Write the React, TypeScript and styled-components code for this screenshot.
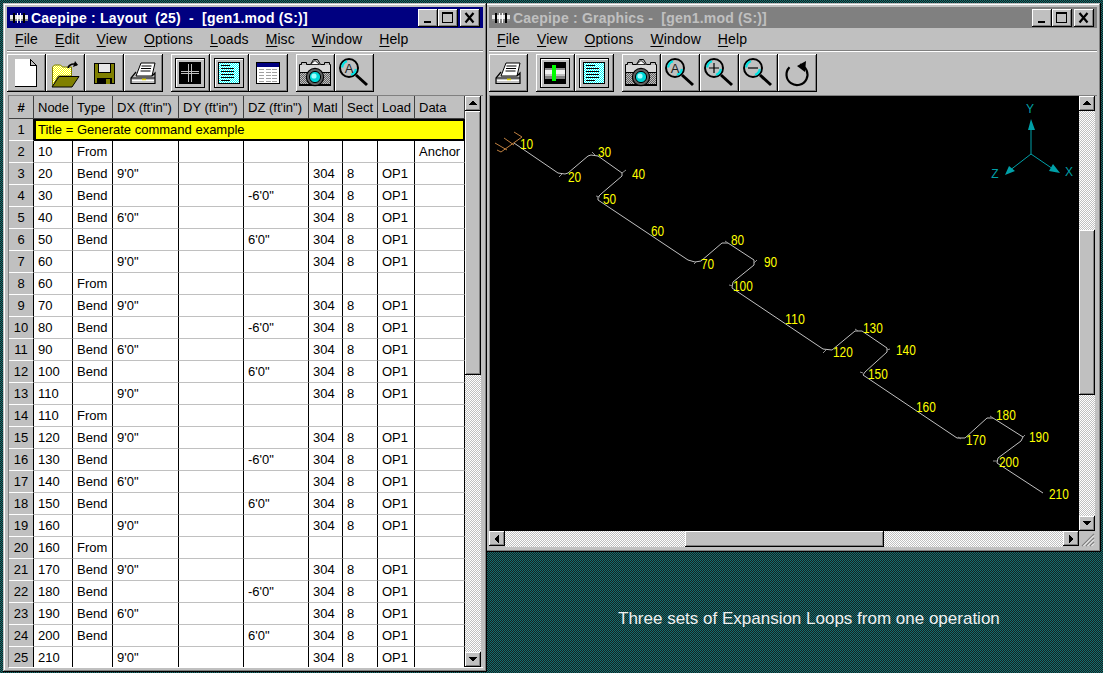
import React from "react";
import styled, { createGlobalStyle, css } from "styled-components";

const Global = createGlobalStyle`
  html, body { margin: 0; padding: 0; width: 1103px; height: 673px; overflow: hidden; }
  body { font-family: "Liberation Sans", Arial, sans-serif; color: #000; }
`;

const checker = (a: string, b: string) =>
  `url("data:image/svg+xml,%3Csvg xmlns='http://www.w3.org/2000/svg' width='2' height='2' shape-rendering='crispEdges'%3E%3Crect width='2' height='2' fill='%23${a}'/%3E%3Crect width='1' height='1' fill='%23${b}'/%3E%3Crect x='1' y='1' width='1' height='1' fill='%23${b}'/%3E%3C/svg%3E")`;

const raised = css`
  background-color: #c0c0c0;
  box-sizing: border-box;
  box-shadow: inset -1px -1px #000, inset 1px 1px #fff, inset -2px -2px #808080;
`;

const Desktop = styled.div`
  position: relative;
  width: 1103px;
  height: 673px;
  overflow: hidden;
  background-image: ${checker("182020", "107070")};
  background-size: 2px 2px;
  image-rendering: pixelated;
`;

const Win = styled.section<{ $x: number; $w: number; $h: number; $z: number }>`
  position: absolute;
  left: ${p => p.$x}px;
  top: 3px;
  width: ${p => p.$w}px;
  height: ${p => p.$h}px;
  z-index: ${p => p.$z};
  box-sizing: border-box;
  padding: 4px;
  display: flex;
  flex-direction: column;
  background: #c0c0c0;
  box-shadow: inset -1px -1px #000, inset 1px 1px #c0c0c0, inset -2px -2px #808080, inset 2px 2px #fff;
`;

const TitleBar = styled.header<{ $active: boolean }>`
  height: 21px;
  flex: none;
  display: flex;
  align-items: center;
  padding: 0 3px;
  gap: 3px;
  background: ${p => (p.$active ? "#000080" : "#808080")};
  color: ${p => (p.$active ? "#fff" : "#c0c0c0")};
`;

const TitleText = styled.span`
  flex: 1;
  font-size: 14px;
  font-weight: 700;
  letter-spacing: 0.2px;
  white-space: pre;
`;

const WinButtons = styled.div`
  display: flex;
  align-items: center;
`;

const WinButton = styled.button<{ $gap?: boolean }>`
  ${raised}
  width: 20px;
  height: 18px;
  padding: 0;
  border: 0;
  margin-left: ${p => (p.$gap ? 2 : 0)}px;
  display: flex;
  align-items: center;
  justify-content: center;
`;

const MenuBar = styled.nav`
  height: 22px;
  flex: none;
  display: flex;
  align-items: center;
  gap: 17px;
  padding-left: 8px;
  font-size: 14px;
  letter-spacing: 0.1px;
`;

const MenuItem = styled.span`
  white-space: pre;
  u { text-underline-offset: 2px; }
`;

const Separator = styled.div`
  flex: none;
  height: 1px;
  background: #808080;
  border-bottom: 1px solid #fff;
`;

const ToolBar = styled.div`
  flex: none;
  height: 38px;
  margin: 2px 0 3px;
  display: flex;
`;

const ToolGroup = styled.div`
  display: flex;
  margin-right: 8px;
`;

const ToolButton = styled.button`
  ${raised}
  width: 39px;
  height: 38px;
  padding: 0 1px 0 0;
  border: 0;
  display: flex;
  align-items: center;
  justify-content: center;
`;

const TableArea = styled.div`
  flex: 1;
  min-height: 0;
  margin-left: 1px;
  display: flex;
  overflow: hidden;
  border-top: 1px solid #808080;
  border-left: 1px solid #808080;
  border-bottom: 1px solid #fff;
`;

const Table = styled.div`
  width: 456px;
  flex: none;
  overflow: hidden;
`;

const Row = styled.div`
  display: grid;
  grid-template-columns: 25px 39px 40px 66px 65px 65px 34px 35px 37px 50px;
  height: 22px;
  font-size: 13px;
`;

const HeadRow = styled(Row)`
  height: 23px;
`;

const HeadCell = styled.div<{ $center?: boolean }>`
  background: #c0c0c0;
  border-right: 1px solid #404040;
  border-bottom: 1px solid #404040;
  box-sizing: border-box;
  display: flex;
  align-items: center;
  justify-content: ${p => (p.$center ? "center" : "flex-start")};
  padding-left: ${p => (p.$center ? 0 : 4)}px;
  white-space: pre;
  overflow: hidden;
  font-weight: ${p => (p.$center ? 700 : 400)};
`;

const NumCell = styled.div`
  background: #c0c0c0;
  border-right: 1px solid #000;
  border-bottom: 1px solid #fff;
  box-sizing: border-box;
  display: flex;
  align-items: center;
  justify-content: center;
`;

const Cell = styled.div`
  background: #fff;
  border-right: 1px solid #000;
  border-bottom: 1px solid #c0c0c0;
  box-sizing: border-box;
  display: flex;
  align-items: center;
  padding-left: 4px;
  white-space: pre;
`;

const TitleCell = styled.div`
  grid-column: 2 / -1;
  background: #ff0;
  border: 2px solid #000;
  box-sizing: border-box;
  display: flex;
  align-items: center;
  padding: 0 0 2px 2px;
  white-space: pre;
`;

const VScroll = styled.div`
  width: 16px;
  flex: none;
  display: flex;
  flex-direction: column;
`;

const HScroll = styled.div`
  height: 16px;
  flex: 1;
  display: flex;
`;

const ScrollButton = styled.div`
  ${raised}
  width: 16px;
  height: 15px;
  flex: none;
  display: flex;
  align-items: center;
  justify-content: center;
`;

const Gutter = styled.div<{ $size?: number }>`
  flex: ${p => (p.$size ? `0 0 ${p.$size}px` : "1")};
  background-image: ${checker("c0c0c0", "ffffff")};
  background-size: 2px 2px;
`;

const Thumb = styled.div<{ $size: number }>`
  ${raised}
  flex: 0 0 ${p => p.$size}px;
`;

const GraphicsArea = styled.div`
  flex: none;
  display: grid;
  grid-template-columns: 590px 16px;
  grid-template-rows: 435px 16px;
  border-top: 1px solid #808080;
`;

const Canvas = styled.div`
  background: #000;
  overflow: hidden;
  border-left: 1px solid #808080;
  box-sizing: border-box;
  svg { display: block; }
`;

const ResizeGrip = styled.div`
  background: #c0c0c0;
  display: flex;
  align-items: flex-end;
  justify-content: flex-end;
`;

const Caption = styled.div`
  position: absolute;
  left: 618px;
  top: 609px;
  font-size: 17px;
  line-height: 19px;
  color: #f0f0f0;
  white-space: pre;
`;

/* ---------- icons ---------- */

const Pixel = styled.svg`
  display: block;
  shape-rendering: crispEdges;
  flex: none;
`;

const Smooth = styled.svg`
  display: block;
  flex: none;
`;

const HiddenDefs = styled.svg`
  position: absolute;
  width: 0;
  height: 0;
`;

const Defs = () => (
  <HiddenDefs aria-hidden="true">
    <defs>
      <pattern id="ditherY" width="2" height="2" patternUnits="userSpaceOnUse">
        <rect width="2" height="2" fill="#ffff00" shapeRendering="crispEdges" />
        <rect width="1" height="1" fill="#fff" shapeRendering="crispEdges" />
        <rect x="1" y="1" width="1" height="1" fill="#fff" shapeRendering="crispEdges" />
      </pattern>
      <pattern id="ditherC" width="2" height="2" patternUnits="userSpaceOnUse">
        <rect width="2" height="2" fill="#00ffff" shapeRendering="crispEdges" />
        <rect width="1" height="1" fill="#fff" shapeRendering="crispEdges" />
        <rect x="1" y="1" width="1" height="1" fill="#fff" shapeRendering="crispEdges" />
      </pattern>
      <pattern id="ditherG" width="2" height="2" patternUnits="userSpaceOnUse">
        <rect width="2" height="2" fill="#606060" shapeRendering="crispEdges" />
        <rect width="1" height="1" fill="#c0c0c0" shapeRendering="crispEdges" />
        <rect x="1" y="1" width="1" height="1" fill="#c0c0c0" shapeRendering="crispEdges" />
      </pattern>
    </defs>
  </HiddenDefs>
);

const AppIcon = () => (
  <Pixel width="18" height="10" viewBox="0 0 18 10">
    <rect x="0" y="2" width="18" height="6" fill="#e8e8e8" />
    <rect x="0" y="6" width="18" height="2" fill="#909090" />
    <rect x="3" y="0" width="2" height="10" fill="#000" />
    <rect x="7" y="0" width="1" height="10" fill="#fff" />
    <rect x="10" y="0" width="1" height="10" fill="#fff" />
    <rect x="13" y="0" width="2" height="10" fill="#000" />
  </Pixel>
);

const MinGlyph = () => (
  <Pixel width="14" height="12" viewBox="0 0 14 12"><rect x="3" y="9" width="7" height="2" fill="#000" /></Pixel>
);
const MaxGlyph = () => (
  <Pixel width="14" height="12" viewBox="0 0 14 12">
    <path d="M1 0h11v11H1z M2 2v8h9V2z" fill="#000" fillRule="evenodd" />
  </Pixel>
);
const CloseGlyph = () => (
  <Smooth width="14" height="12" viewBox="0 0 14 12">
    <path d="M2.5 1l8 9.5M10.5 1l-8 9.5" stroke="#000" strokeWidth="2.2" fill="none" />
  </Smooth>
);

const Arrow = ({ d }: { d: "up" | "down" | "right" | "left" }) => {
  const paths = {
    up: "M4 1h1v1h1v1h1v1h1v1H0V4h1V3h1V2h1V1z",
    down: "M0 1h8v1H7v1H6v1H5v1H3V4H2V3H1V2H0z",
    right: "M2 0h1v1h1v1h1v1h1v2H5v1H4v1H3v1H2z",
    left: "M5 0h1v8H5V7H4V6H3V5H2V3h1V2h1V1h1z",
  };
  return (
    <Pixel width="8" height="8" viewBox="0 0 8 8"><path d={paths[d]} fill="#000" /></Pixel>
  );
};

const Grip = () => (
  <Smooth width="16" height="16" viewBox="0 0 16 16">
    <path d="M15 3L3 15M15 7L7 15M15 11L11 15" stroke="#808080" strokeWidth="1.2" />
    <path d="M15 4.5L4.5 15M15 8.5L8.5 15M15 12.5L12.5 15" stroke="#fff" strokeWidth="1" />
  </Smooth>
);

const NewIcon = () => (
  <Pixel width="32" height="32" viewBox="0 0 32 32">
    <path d="M5 2h15l6 6v21H5z" fill="#fff" />
    <path d="M20 2l6 6h-6z" fill="#c0c0c0" />
    <path d="M20.5 2v6.5h6" fill="none" stroke="#000" />
    <path d="M20 2l6 6" stroke="#000" />
    <path d="M26.5 8v21.5H5" fill="none" stroke="#000" />
  </Pixel>
);

const OpenIcon = () => (
  <Smooth width="32" height="32" viewBox="0 0 32 32">
    <path d="M3.5 30V10l2-2h6l2 2h9v9H9z" fill="url(#ditherY)" stroke="#808000" strokeWidth="1" />
    <path d="M10 19.5h20l-7 10.5H3z" fill="#808000" stroke="#000" strokeWidth="1" />
    <path d="M19 11c1-4 6-5 9-3" fill="none" stroke="#000" strokeWidth="1.6" />
    <path d="M26 4l3 4-5 2z" fill="#000" />
  </Smooth>
);

const SaveIcon = () => (
  <Pixel width="32" height="32" viewBox="0 0 32 32">
    <rect x="6.5" y="6.5" width="20" height="20" fill="#808000" stroke="#000" />
    <rect x="10.5" y="6.5" width="12" height="9" fill="#e8e8e8" stroke="#000" />
    <rect x="9" y="21" width="15" height="6" fill="#000" />
    <rect x="18" y="22" width="4" height="5" fill="#808000" />
  </Pixel>
);

const PrintIcon = () => (
  <Smooth width="32" height="32" viewBox="0 0 32 32">
    <path d="M8 15h20v11H4v-6z" fill="#c0c0c0" />
    <path d="M14 6h14l-3 13H9z" fill="#fff" stroke="#000" strokeWidth="1" />
    <path d="M14.5 9h10M14 11.5h10M13.5 14h10" stroke="#000" strokeWidth="1" />
    <path d="M9 15l-5 6v5.5h24V16l-3 3" fill="none" stroke="#000" strokeWidth="1.2" />
    <path d="M4 21h24" stroke="#000" strokeWidth="1" />
    <path d="M5 23.5h22" stroke="#fff" strokeWidth="1" />
    <rect x="15" y="21.6" width="4" height="1.6" fill="#e0d000" />
  </Smooth>
);

const Frame = ({ children }: { children: React.ReactNode }) => (
  <Pixel width="30" height="30" viewBox="0 0 30 30">
    <rect x=".5" y=".5" width="29" height="29" fill="#c0c0c0" stroke="#000" />
    <rect x="1" y="1" width="28" height="1" fill="#fff" />
    <rect x="1" y="1" width="1" height="28" fill="#fff" />
    {children}
  </Pixel>
);

const GridIcon = () => (
  <Frame>
    <rect x="4" y="4" width="22" height="22" fill="#000" />
    <path d="M13 6h1v18h-1zM16 6h1v18h-1zM6 13h18v1H6zM6 15h18v1H6z" fill="#c0c0c0" />
  </Frame>
);

const PipeIcon = () => (
  <Frame>
    <rect x="4" y="4" width="22" height="22" fill="#000" />
    <rect x="5" y="10" width="20" height="2" fill="#909090" />
    <rect x="5" y="12" width="20" height="4" fill="#f0f0f0" />
    <rect x="5" y="16" width="20" height="2" fill="#c0c0c0" />
    <rect x="5" y="18" width="20" height="3" fill="#808080" />
    <rect x="12" y="7" width="4" height="16" fill="#00ff00" />
  </Frame>
);

const ListIcon = () => (
  <Frame>
    <rect x="4.5" y="4.5" width="21" height="21" fill="url(#ditherC)" stroke="#000" />
    <path d="M7 7h9v1H7zM7 10h13v1H7zM7 13h13v1H7zM7 16h13v1H7zM7 19h13v1H7zM7 22h9v1H7z" fill="#000" />
  </Frame>
);

const TableIcon = () => (
  <Pixel width="24" height="22" viewBox="0 0 24 22">
    <rect x=".5" y=".5" width="23" height="21" fill="#fff" stroke="#000" />
    <rect x="1" y="1" width="22" height="4" fill="#000080" />
    <path d="M3 7h5v1H3zM10 7h5v1h-5zM16 7h5v1h-5zM3 10h5v1H3zM10 10h5v1h-5zM16 10h5v1h-5zM3 13h5v1H3zM10 13h5v1h-5zM16 13h5v1h-5zM3 16h5v1H3zM10 16h5v1h-5zM16 16h5v1h-5zM3 19h5v1H3zM10 19h5v1h-5zM16 19h5v1h-5z" fill="#a0a0a0" />
  </Pixel>
);

const CameraIcon = () => (
  <Smooth width="34" height="30" viewBox="0 0 34 30">
    <path d="M1.5 27.5V6.5h2v-2h5v2h4l3-5h4l3 5h4v-2h5v2h1v21z" fill="#c0c0c0" stroke="#000" strokeWidth="1" />
    <path d="M12.5 6.5l4.5-4 4.5 4z" fill="#fff" stroke="#000" strokeWidth=".8" />
    <rect x="2" y="7" width="30" height="7" fill="#d8d8d8" />
    <rect x="2" y="15" width="30" height="11" fill="url(#ditherG)" />
    <path d="M2 14.5h30" stroke="#000" strokeWidth="1" />
    <rect x="1" y="26" width="32" height="2" fill="#000" />
    <circle cx="17" cy="19" r="8.6" fill="#606060" stroke="#000" strokeWidth="1.2" />
    <circle cx="17" cy="19" r="5.6" fill="#00d8d8" stroke="#000" strokeWidth="1" />
    <circle cx="16" cy="18" r="2.6" fill="#a0ffff" />
  </Smooth>
);

const Lens = ({ children }: { children?: React.ReactNode }) => (
  <Smooth width="32" height="32" viewBox="0 0 32 32">
    <circle cx="11" cy="11" r="9" fill="#c0c0c0" stroke="#000" strokeWidth="2" />
    <path d="M4.2 10.5A7 7 0 0 1 9 4.2" fill="none" stroke="#00e0e0" strokeWidth="2.2" />
    <path d="M17.8 12A7 7 0 0 1 13 17.8" fill="none" stroke="#00e0e0" strokeWidth="2.2" />
    <path d="M18 18l11 10" stroke="#000" strokeWidth="3" />
    {children}
  </Smooth>
);

const LensText = styled.text`
  font-family: "Liberation Sans", Arial, sans-serif;
  font-size: 13px;
  fill: #202020;
`;

const ZoomAllIcon = () => (
  <Lens><LensText x="11" y="16" textAnchor="middle">A</LensText></Lens>
);
const ZoomInIcon = () => (
  <Lens><path d="M6 11h10M11 6v10" stroke="#000" strokeWidth="1.2" /></Lens>
);
const ZoomOutIcon = () => (
  <Lens><path d="M6 11h10" stroke="#000" strokeWidth="1.2" /></Lens>
);
const RotateIcon = () => (
  <Smooth width="32" height="32" viewBox="0 0 32 32">
    <path d="M19 7.5A10.5 10.5 0 1 1 8.5 10.2" fill="none" stroke="#000" strokeWidth="2.2" />
    <path d="M16 9l9-5-1 11z" fill="#000" />
  </Smooth>
);

/* ---------- drawing ---------- */

const PIPE =
  "514,143 558,173 565,174 568,173 588,156 591,155 598,156 622,173 622,176 601,194 598,197 598,200 " +
  "688,260 695,262 701,261 722,243 728,243 754,260 754,265 733,282 732,288 " +
  "823,349 832,350 855,331 862,331 887,348 887,352 865,372 863,375 " +
  "957,438 965,438 987,418 993,418 1023,437 1021,441 998,458 997,463 1043,493";

const TICKS =
  "M562 174l-3 3M592 152l3 3M622 173l4-3M600 197l-4-1M697 261l-3 3M725 241l3 2M754 263l3-3M733 286l-4-1" +
  "M826 350l-3 3M858 331l-3-2M887 350l3-1M863 373l-3-1M958 437l3 2M990 416l3 2M1023 437l2-2M997 461l-4 0";

const LABELS: [string, number, number][] = [
  ["10", 520, 144], ["20", 568, 177], ["30", 598, 152], ["40", 632, 174], ["50", 603, 199],
  ["60", 651, 231], ["70", 701, 264], ["80", 731, 240], ["90", 764, 262], ["100", 733, 286],
  ["110", 785, 319], ["120", 833, 352], ["130", 863, 328], ["140", 896, 350], ["150", 868, 374],
  ["160", 916, 407], ["170", 966, 440], ["180", 996, 415], ["190", 1029, 437], ["200", 999, 462],
  ["210", 1049, 494],
];

const NodeLabel = styled.text`
  font-family: "Liberation Sans", Arial, sans-serif;
  font-size: 14px;
  fill: #ffff00;
  dominant-baseline: central;
`;

const AxisLabel = styled.text`
  font-family: "Liberation Sans", Arial, sans-serif;
  font-size: 12px;
  fill: #00a0a8;
  text-anchor: middle;
  dominant-baseline: central;
`;

const PipeDrawing = () => (
  <svg width="589" height="435" viewBox="490 96 589 435">
    <polyline points={PIPE} fill="none" stroke="#c0c0c0" strokeWidth="1" />
    <path d={TICKS} fill="none" stroke="#909090" strokeWidth="1" />
    <path
      d="M501 152l21-15M495 143l12 7M504 138l10 7M514 132l8 5M501 152l-4-2"
      fill="none"
      stroke="#c08040"
      strokeWidth="1"
    />
    {LABELS.map(([t, x, y]) => (
      <NodeLabel key={t} x={x} y={y} textLength={t.length * 6.6} lengthAdjust="spacingAndGlyphs">{t}</NodeLabel>
    ))}
    <path d="M1031 154V128M1031 154l-22 17M1031 154l22 15" stroke="#00a0a8" strokeWidth="1" fill="none" />
    <path d="M1031 119l4 11h-7zM1060 173l-11-2 4-7zM1005 175l4-9 6 5z" fill="#00a0a8" />
    <AxisLabel x="1030" y="109">Y</AxisLabel>
    <AxisLabel x="995" y="174">Z</AxisLabel>
    <AxisLabel x="1069" y="172">X</AxisLabel>
  </svg>
);

/* ---------- data ---------- */

type Rec = { node: string; type?: string; dx?: string; dz?: string; from?: boolean; data?: string };

const loop = (a: number): Rec[] => [
  { node: String(a), type: "Bend", dx: `9'0"` },
  { node: String(a + 10), type: "Bend", dz: `-6'0"` },
  { node: String(a + 20), type: "Bend", dx: `6'0"` },
  { node: String(a + 30), type: "Bend", dz: `6'0"` },
  { node: String(a + 40), dx: `9'0"` },
];

const RECORDS: Rec[] = [
  { node: "10", type: "From", from: true, data: "Anchor" },
  ...loop(20),
  { node: "60", type: "From", from: true },
  ...loop(70),
  { node: "110", type: "From", from: true },
  ...loop(120),
  { node: "160", type: "From", from: true },
  ...loop(170),
];

const HEADS = ["Node", "Type", `DX (ft'in")`, `DY (ft'in")`, `DZ (ft'in")`, "Matl", "Sect", "Load", "Data"];

const Menu = ({ items }: { items: string[] }) => (
  <MenuBar>
    {items.map(m => (
      <MenuItem key={m}><u>{m[0]}</u>{m.slice(1)}</MenuItem>
    ))}
  </MenuBar>
);

const WindowTitle = ({ active, text }: { active: boolean; text: string }) => (
  <TitleBar $active={active}>
    <AppIcon />
    <TitleText>{text}</TitleText>
    <WinButtons>
      <WinButton aria-label="Minimize"><MinGlyph /></WinButton>
      <WinButton aria-label="Maximize"><MaxGlyph /></WinButton>
      <WinButton $gap aria-label="Close"><CloseGlyph /></WinButton>
    </WinButtons>
  </TitleBar>
);

export default function App() {
  return (
    <Desktop>
      <Global />
      <Defs />

      <Win $x={3} $w={484} $h={669} $z={2}>
        <WindowTitle active text={`Caepipe : Layout  (25)  -  [gen1.mod (S:)]`} />
        <Menu items={["File", "Edit", "View", "Options", "Loads", "Misc", "Window", "Help"]} />
        <Separator />
        <ToolBar>
          <ToolGroup>
            <ToolButton><NewIcon /></ToolButton>
            <ToolButton><OpenIcon /></ToolButton>
            <ToolButton><SaveIcon /></ToolButton>
            <ToolButton><PrintIcon /></ToolButton>
          </ToolGroup>
          <ToolGroup>
            <ToolButton><GridIcon /></ToolButton>
            <ToolButton><ListIcon /></ToolButton>
            <ToolButton><TableIcon /></ToolButton>
          </ToolGroup>
          <ToolGroup>
            <ToolButton><CameraIcon /></ToolButton>
            <ToolButton><ZoomAllIcon /></ToolButton>
          </ToolGroup>
        </ToolBar>
        <TableArea>
          <Table>
            <HeadRow>
              <HeadCell $center>#</HeadCell>
              {HEADS.map(h => <HeadCell key={h}>{h}</HeadCell>)}
            </HeadRow>
            <Row>
              <NumCell>1</NumCell>
              <TitleCell>Title = Generate command example</TitleCell>
            </Row>
            {RECORDS.map((r, i) => (
              <Row key={i}>
                <NumCell>{i + 2}</NumCell>
                <Cell>{r.node}</Cell>
                <Cell>{r.type}</Cell>
                <Cell>{r.dx}</Cell>
                <Cell />
                <Cell>{r.dz}</Cell>
                <Cell>{r.from ? "" : "304"}</Cell>
                <Cell>{r.from ? "" : "8"}</Cell>
                <Cell>{r.from ? "" : "OP1"}</Cell>
                <Cell>{r.data}</Cell>
              </Row>
            ))}
          </Table>
          <VScroll>
            <ScrollButton><Arrow d="up" /></ScrollButton>
            <Thumb $size={264} />
            <Gutter />
            <ScrollButton><Arrow d="down" /></ScrollButton>
          </VScroll>
        </TableArea>
      </Win>

      <Win $x={485} $w={616} $h={549} $z={1}>
        <WindowTitle active={false} text={`Caepipe : Graphics -  [gen1.mod (S:)]`} />
        <Menu items={["File", "View", "Options", "Window", "Help"]} />
        <Separator />
        <ToolBar>
          <ToolGroup>
            <ToolButton><PrintIcon /></ToolButton>
          </ToolGroup>
          <ToolGroup>
            <ToolButton><PipeIcon /></ToolButton>
            <ToolButton><ListIcon /></ToolButton>
          </ToolGroup>
          <ToolGroup>
            <ToolButton><CameraIcon /></ToolButton>
            <ToolButton><ZoomAllIcon /></ToolButton>
            <ToolButton><ZoomInIcon /></ToolButton>
            <ToolButton><ZoomOutIcon /></ToolButton>
            <ToolButton><RotateIcon /></ToolButton>
          </ToolGroup>
        </ToolBar>
        <GraphicsArea>
          <Canvas><PipeDrawing /></Canvas>
          <VScroll>
            <ScrollButton><Arrow d="up" /></ScrollButton>
            <Gutter $size={119} />
            <Thumb $size={165} />
            <Gutter />
            <ScrollButton><Arrow d="down" /></ScrollButton>
          </VScroll>
          <HScroll>
            <ScrollButton><Arrow d="left" /></ScrollButton>
            <Gutter $size={180} />
            <Thumb $size={199} />
            <Gutter />
            <ScrollButton><Arrow d="right" /></ScrollButton>
          </HScroll>
          <ResizeGrip><Grip /></ResizeGrip>
        </GraphicsArea>
      </Win>

      <Caption>Three sets of Expansion Loops from one operation</Caption>
    </Desktop>
  );
}
